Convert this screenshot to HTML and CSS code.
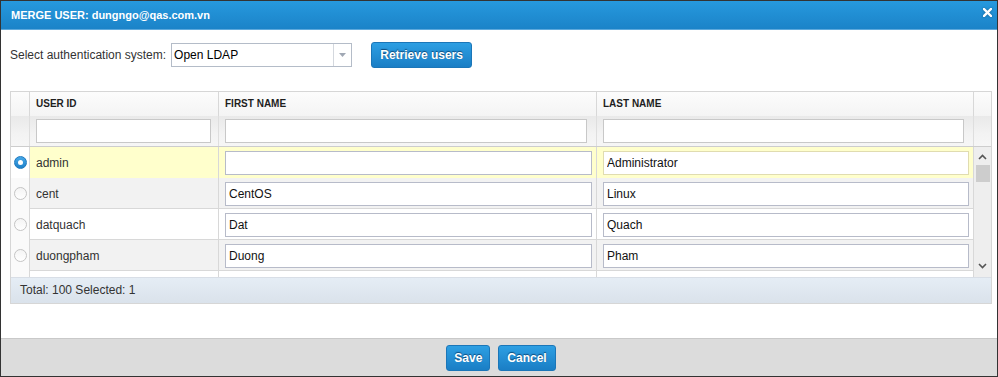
FILE: index.html
```html
<!DOCTYPE html>
<html lang="en">
<head>
  <meta charset="UTF-8">
  <meta name="viewport" content="width=device-width, initial-scale=1.0">
  <title>Merge User</title>
  <link rel="stylesheet" href="styles.css">
</head>
<body>
  <div class="dialog">
    <div class="dialog-title">
      <span>MERGE USER: dungngo@qas.com.vn</span>
      <svg class="close-icon" width="9" height="9" viewBox="0 0 9 9">
        <path d="M1 1 L8 8 M8 1 L1 8" stroke="#fff" stroke-width="2.4" stroke-linecap="square"/>
      </svg>
    </div>

    <div class="dialog-body">
      <div class="toolbar">
        <label for="authSystem">Select authentication system:</label>
        <div class="select-box" id="authSystem">
          <span class="select-value">Open LDAP</span>
          <span class="select-arrow">
            <svg width="7" height="4" viewBox="0 0 7 4"><path d="M0 0 H7 L3.5 4 Z" fill="#a0a8b4"/></svg>
          </span>
        </div>
        <button class="btn btn-retrieve">Retrieve users</button>
      </div>

      <div class="grid">
        <div class="grid-head">
          <div class="head-row">
            <div class="hcell"></div>
            <div class="hcell">USER ID</div>
            <div class="hcell">FIRST NAME</div>
            <div class="hcell">LAST NAME</div>
            <div class="hcell last"></div>
          </div>
          <div class="filter-row">
            <div class="fcell"></div>
            <div class="fcell"><input type="text" class="filter-input first"></div>
            <div class="fcell"><input type="text" class="filter-input"></div>
            <div class="fcell"><input type="text" class="filter-input"></div>
            <div class="fcell last"></div>
          </div>
        </div>

        <div class="grid-body">
          <div class="rows">
            <div class="row selected">
              <div class="cell radio-cell"><span class="radio checked"></span></div>
              <div class="cell text-cell">admin</div>
              <div class="cell"><input type="text" class="cell-input" value=""></div>
              <div class="cell"><input type="text" class="cell-input focus" value="Administrator"></div>
            </div>
            <div class="row alt">
              <div class="cell radio-cell"><span class="radio"></span></div>
              <div class="cell text-cell">cent</div>
              <div class="cell"><input type="text" class="cell-input" value="CentOS"></div>
              <div class="cell"><input type="text" class="cell-input" value="Linux"></div>
            </div>
            <div class="row">
              <div class="cell radio-cell"><span class="radio"></span></div>
              <div class="cell text-cell">datquach</div>
              <div class="cell"><input type="text" class="cell-input" value="Dat"></div>
              <div class="cell"><input type="text" class="cell-input" value="Quach"></div>
            </div>
            <div class="row alt">
              <div class="cell radio-cell"><span class="radio"></span></div>
              <div class="cell text-cell">duongpham</div>
              <div class="cell"><input type="text" class="cell-input" value="Duong"></div>
              <div class="cell"><input type="text" class="cell-input" value="Pham"></div>
            </div>
            <!-- next row, scrolled out of view -->
            <div class="row">
              <div class="cell radio-cell"></div>
              <div class="cell"></div>
              <div class="cell"></div>
              <div class="cell"></div>
            </div>
          </div>
          <div class="scrollbar">
            <svg class="scroll-arrow up" width="9" height="6" viewBox="0 0 9 6"><path d="M1 5 L4.5 1.5 L8 5" fill="none" stroke="#555" stroke-width="1.6"/></svg>
            <div class="scroll-thumb"></div>
            <div class="scroll-track"></div>
            <svg class="scroll-arrow down" width="9" height="6" viewBox="0 0 9 6"><path d="M1 1 L4.5 4.5 L8 1" fill="none" stroke="#555" stroke-width="1.6"/></svg>
          </div>
        </div>

        <div class="grid-footer">Total: 100 Selected: 1</div>
      </div>
    </div>

    <div class="dialog-buttons">
      <button class="btn">Save</button>
      <button class="btn btn-cancel">Cancel</button>
    </div>
  </div>
</body>
</html>
```

FILE: styles.css
```css
body {
  margin: 0;
  font-family: "Liberation Sans", Arial, sans-serif;
  font-size: 12px;
  color: #333;
  background: #fff;
}
.dialog {
  width: 998px;
  height: 377px;
  box-sizing: border-box;
  border: 1px solid #333;
  display: flex;
  flex-direction: column;
}
.dialog-title {
  height: 28px;
  flex-shrink: 0;
  border-bottom: 1px solid #5ea9dc;
  background: linear-gradient(#2699de, #1b83c8);
  color: #fff;
  font-weight: bold;
  font-size: 11px;
  display: flex;
  align-items: center;
  justify-content: space-between;
  padding: 0 5px 0 10px;
}
.close-icon {
  margin-top: -5px;
  filter: drop-shadow(0 0 1px rgba(0, 0, 0, 0.3));
}
.dialog-body {
  flex: 1;
  padding: 12px 5px 0 9px;
}
.toolbar {
  display: flex;
  align-items: center;
  height: 26px;
}
.toolbar label {
  color: #333;
  margin-right: 5px;
}
.select-box {
  width: 179px;
  height: 22px;
  border: 1px solid #b4bcc8;
  display: flex;
  align-items: stretch;
  background: #fff;
}
.select-value {
  flex: 1;
  padding-left: 2px;
  line-height: 22px;
  color: #000;
  font-size: 12px;
}
.select-arrow {
  width: 17px;
  border-left: 1px solid #d4d8de;
  display: flex;
  align-items: center;
  justify-content: center;
}
.btn {
  font-family: "Liberation Sans", Arial, sans-serif;
  font-size: 12px;
  font-weight: bold;
  color: #fff;
  text-shadow: 0 -1px 1px rgba(0, 40, 80, 0.7);
  background: linear-gradient(#2d9fe3, #1a7ec5);
  border: 1px solid #1b76b8;
  border-radius: 3px;
  height: 26px;
  padding: 0 7px;
  cursor: pointer;
}
.btn-retrieve {
  margin-left: 19px;
  width: 101px;
}
.btn-cancel {
  padding: 0 8px;
}
.grid {
  margin-top: 23px;
  width: 982px;
  border: 1px solid #d6d6d6;
  box-sizing: border-box;
}
.head-row,
.filter-row {
  display: grid;
  grid-template-columns: 19px 189px 378px 377px 17px;
}
.row {
  display: grid;
  grid-template-columns: 19px 189px 378px 377px;
}
.head-row {
  height: 24px;
  background: linear-gradient(#fcfcfc, #f4f4f4);
}
.hcell {
  border-right: 1px solid #d8d8d8;
  font-size: 10px;
  font-weight: bold;
  color: #1e1e1e;
  padding: 6px 0 0 6px;
}
.hcell.last,
.fcell.last {
  border-right: none;
}
.filter-row {
  height: 30px;
  border-bottom: 1px solid #cdcdcd;
  background: linear-gradient(#e9e9e9, #f3f3f3 60%, #f6f6f6);
}
.fcell {
  border-right: 1px solid #dedede;
  padding: 3px 0 0 6px;
}
.filter-input {
  box-sizing: border-box;
  width: calc(100% - 9px);
  height: 24px;
  border: 1px solid #c8c8c8;
  background: #fff;
  padding: 0 4px;
}
.filter-input.first {
  width: 175px;
}
.grid-body {
  display: flex;
  height: 130px;
}
.rows {
  flex: 1;
  overflow: hidden;
}
.row {
  height: 31px;
  box-sizing: border-box;
  border-bottom: 1px solid #d8d8d8;
  background: #fff;
}
.row.alt {
  background: #f2f2f2;
}
.row.selected .cell {
  background: #ffffcc;
}
.row.selected .radio-cell {
  background: #fff;
}
.cell {
  border-right: 1px solid #d8d8d8;
  padding: 4px 0 0 6px;
}
.radio-cell {
  padding: 0;
  display: flex;
  align-items: center;
  justify-content: center;
  background: #fafafa;
}
.text-cell {
  padding: 1px 0 0 6px;
  line-height: 30px;
  color: #333;
}
.cell-input {
  box-sizing: border-box;
  width: calc(100% - 4px);
  height: 24px;
  border: 1px solid #b7bbc9;
  background: #fff;
  padding: 0 3px;
  font-family: "Liberation Sans", Arial, sans-serif;
  font-size: 12px;
  color: #111;
}
.cell-input.focus {
  border-color: #e0dcb0;
}
.radio {
  width: 11px;
  height: 11px;
  border-radius: 50%;
  border: 1px solid #c4c4c4;
  background: linear-gradient(#f4f4f4, #fff);
  position: relative;
}
.radio.checked {
  border-color: #1d78be;
  background: linear-gradient(#47a8e8, #1d80c8);
}
.radio.checked::after {
  content: "";
  position: absolute;
  left: 3px;
  top: 3px;
  width: 5px;
  height: 5px;
  border-radius: 50%;
  background: #fff;
}
.scrollbar {
  width: 17px;
  background: #eeeeee;
  display: flex;
  flex-direction: column;
  align-items: center;
}
.scroll-arrow.up {
  margin: 7px 0 5px;
}
.scroll-arrow.down {
  margin: 0 0 8px;
}
.scroll-thumb {
  width: 14px;
  height: 17px;
  background: #cdcdcd;
}
.scroll-track {
  flex: 1;
}
.grid-footer {
  height: 26px;
  line-height: 24px;
  padding-left: 9px;
  background: linear-gradient(#e5edf5, #dae2eb);
  border-top: 1px solid #d8dee6;
  color: #333;
  box-sizing: border-box;
}
.dialog-buttons {
  height: 38px;
  flex-shrink: 0;
  box-sizing: border-box;
  border-top: 1px solid #c9c9c9;
  background: #dcdcdc;
  display: flex;
  justify-content: center;
  align-items: center;
  gap: 8px;
  padding-left: 4px;
}
```
